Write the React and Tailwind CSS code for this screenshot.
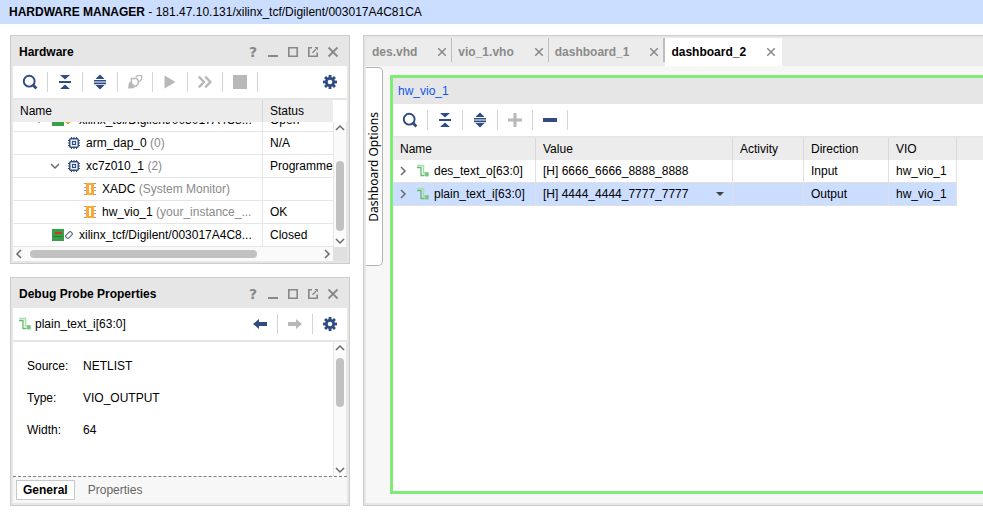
import React from "react";

const NAVY = "#2f4b82";
const MUTED = "#b8b8b8";

function Svg({ w = 16, h = 16, label, children, className = "" }) {
  return (
    <svg
      width={w}
      height={h}
      viewBox={`0 0 ${w} ${h}`}
      fill="none"
      aria-hidden={label ? undefined : true}
      className={`block shrink-0 ${className}`}
    >
      {children}
    </svg>
  );
}

const SearchIcon = () => (
  <Svg>
    <circle cx="7.2" cy="7.2" r="5.4" stroke={NAVY} strokeWidth="1.9" />
    <path d="M11 11l3.4 3.4" stroke={NAVY} strokeWidth="2.8" />
  </Svg>
);

const CollapseIcon = () => (
  <Svg>
    <path d="M3 1h10L8 5.6zM3 15h10L8 10.4z" fill={NAVY} />
    <path d="M2 7h12v2H2z" fill={NAVY} />
  </Svg>
);

const ExpandIcon = () => (
  <Svg>
    <path d="M8 0.6L12.6 5H3.4zM8 15.4l4.6-4.4H3.4z" fill={NAVY} />
    <path d="M2 6h12v1.6H2zM2 8.6h12v1.6H2z" fill={NAVY} />
  </Svg>
);

const ConnectIcon = () => (
  <Svg>
    <path d="M4.4 4.4h5.2l1.6 1.8v3.6L9.4 12H7L4.4 9.4z" stroke={MUTED} strokeWidth="1.5" />
    <path d="M3 7.6l5 5.2-1.6 1.4L1 14.6l.8-5z" fill={MUTED} />
    <circle cx="7.6" cy="8" r="2.2" fill="#fff" />
    <path d="M8.6 3.2l2-1.6h4v3.6l-2.2 2.6" stroke={MUTED} strokeWidth="1.3" />
  </Svg>
);

const PlayIcon = () => (
  <Svg>
    <path d="M2.5 1.5v13L13.5 8z" fill={MUTED} />
  </Svg>
);

const FastIcon = () => (
  <Svg>
    <path d="M1.8 2.6L7 8l-5.2 5.4M8.2 2.6L13.4 8l-5.2 5.4" stroke={MUTED} strokeWidth="2.4" />
  </Svg>
);

const StopIcon = () => (
  <Svg>
    <path d="M1 1h14v14H1z" fill={MUTED} />
  </Svg>
);

const GearIcon = () => (
  <Svg>
    <g fill={NAVY}>
      <path d="M6.6 1h2.8v14H6.6z" />
      <path d="M1 6.6h14v2.8H1z" />
      <path d="M6.6 1h2.8v14H6.6z" transform="rotate(45 8 8)" />
      <path d="M1 6.6h14v2.8H1z" transform="rotate(45 8 8)" />
      <circle cx="8" cy="8" r="5" />
    </g>
    <circle cx="8" cy="8" r="2.3" fill="#fff" />
  </Svg>
);

const PlusIcon = () => (
  <Svg>
    <path d="M8 1v14M1 8h14" stroke={MUTED} strokeWidth="3" />
  </Svg>
);

const MinusIcon = () => (
  <Svg>
    <path d="M1 6h14v4H1z" fill={NAVY} />
  </Svg>
);

const BackIcon = () => (
  <Svg>
    <path d="M1 8l6-5v3h8v4H7v3z" fill={NAVY} />
  </Svg>
);

const ForwardIcon = () => (
  <Svg>
    <path d="M15 8L9 3v3H1v4h8v3z" fill={MUTED} />
  </Svg>
);

const CloseIcon = ({ size = 12 }) => (
  <svg width={size} height={size} viewBox="0 0 12 12" fill="none" aria-hidden="true" className="block shrink-0">
    <path d="M1.5 1.5l9 9M10.5 1.5l-9 9" stroke="#888" strokeWidth="1.8" />
  </svg>
);

const MinimizeIcon = () => (
  <Svg w={12} h={12}>
    <path d="M1 9h10v2H1z" fill="#888" />
  </Svg>
);

const MaximizeIcon = () => (
  <Svg w={12} h={12}>
    <path d="M1.8 1.8h8.4v8.4H1.8z" stroke="#888" strokeWidth="1.6" />
  </Svg>
);

const PopoutIcon = () => (
  <Svg w={12} h={12}>
    <path d="M5 1.8H1.8v8.4h8.4V6.5" stroke="#888" strokeWidth="1.6" />
    <path d="M5.5 6.8L9 3.2" stroke="#888" strokeWidth="1.4" />
    <path d="M7.4 1H11v3.6z" fill="#888" />
  </Svg>
);

const ProbeIcon = () => (
  <Svg w={14} h={14}>
    <path d="M1 3.5h4v8h3.5" stroke="#62bb6b" strokeWidth="1.3" />
    <path d="M1 1.5h6.5v7.5h2" stroke="#a9dcab" strokeWidth="1.5" />
    <rect x="8.8" y="8" width="4" height="4.6" rx="1.4" fill="#7cc682" />
  </Svg>
);

const ChipIcon = () => (
  <Svg w={12} h={12}>
    <path
      d="M3.5 0v2M6 0v2M8.5 0v2M3.5 10v2M6 10v2M8.5 10v2M0 3.5h2M0 6h2M0 8.5h2M10 3.5h2M10 6h2M10 8.5h2"
      stroke={NAVY}
      strokeWidth="1.1"
    />
    <rect x="1.8" y="1.8" width="8.4" height="8.4" rx="1" stroke={NAVY} strokeWidth="1.4" />
    <rect x="4.5" y="4.5" width="3" height="3" stroke={NAVY} strokeWidth="1.2" />
  </Svg>
);

const CoreIcon = () => (
  <Svg w={12} h={14}>
    <path d="M0 1.5h12M0 5.5h12M0 8.5h12M0 12.5h12" stroke="#9a9a9a" />
    <path d="M2 1h8v12H2z" fill="#f9a936" />
    <path d="M5 3h2v8H5z" fill="#fff" />
  </Svg>
);

const TargetIcon = ({ open }) => (
  <Svg w={21} h={12}>
    <path d="M0 0h12v12H0z" fill="#37a048" />
    <path d="M3 3h7v2H3z" fill="#c93a2c" />
    <path d="M1 7.5h10" stroke="#2a7f3a" />
    <rect
      x="-3.6"
      y="-2"
      width="7.2"
      height="4"
      rx="1.5"
      transform="translate(17 6) rotate(-45)"
      stroke={open ? "#d99a1c" : "#56657f"}
      strokeWidth="1.1"
      fill={open ? "#f6c24a" : "#fff"}
    />
  </Svg>
);

function Chevron({ dir, className = "" }) {
  const paths = {
    up: "M2 8l4-4 4 4",
    down: "M2 4l4 4 4-4",
    left: "M8 2L4 6l4 4",
    right: "M4 2l4 4-4 4",
  };
  return (
    <Svg w={12} h={12} className={className}>
      <path d={paths[dir]} stroke="#6b6b6b" strokeWidth="1.5" />
    </Svg>
  );
}

function ToolButton({ label, icon, divider = true, disabled = false }) {
  return (
    <>
      <button type="button" aria-label={label} disabled={disabled} className="flex h-8 w-[34px] items-center justify-center">
        {icon}
      </button>
      {divider && <span className="h-5 w-px bg-[#d4d4d4]" />}
    </>
  );
}

function WindowButtons() {
  return (
    <div className="flex pr-1">
      <button type="button" aria-label="Help" className="flex size-5 items-center justify-center font-['DejaVu_Sans',sans-serif] text-[14px] leading-5 font-bold text-[#888]">
        ?
      </button>
      <button type="button" aria-label="Minimize" className="flex size-5 items-center justify-center"><MinimizeIcon /></button>
      <button type="button" aria-label="Maximize" className="flex size-5 items-center justify-center"><MaximizeIcon /></button>
      <button type="button" aria-label="Float" className="flex size-5 items-center justify-center"><PopoutIcon /></button>
      <button type="button" aria-label="Close" className="flex size-5 items-center justify-center"><CloseIcon /></button>
    </div>
  );
}

function Panel({ title, className = "", children }) {
  return (
    <section className={`flex flex-col border border-[#cccccc] bg-[#e6e6e6] p-0.5 ${className}`}>
      <header className="flex h-7 items-center justify-between pl-1.5">
        <h2 className="font-bold">{title}</h2>
        <WindowButtons />
      </header>
      {children}
    </section>
  );
}

function VerticalScrollbar({ children }) {
  return (
    <div className="flex w-3.5 shrink-0 flex-col items-center border-x border-[#e6e6e6] bg-[#fafafa]">
      <Chevron dir="up" />
      {children}
      <Chevron dir="down" />
    </div>
  );
}

function HardwareRow({ indent, chevron, icon, name, note, status }) {
  return (
    <tr>
      <td className={`h-[23px] border-r border-b border-[#e6e6e6] p-0 ${indent}`}>
        <span className="flex items-center">
          {chevron && <Chevron dir="down" className="mr-[7px]" />}
          {icon}
          <span className="ml-1.5 whitespace-nowrap">
            {name}
            {note && <span className="text-[#8a8a8a]"> {note}</span>}
          </span>
        </span>
      </td>
      <td className="h-[23px] border-b border-[#e6e6e6] p-0 pl-[7px] whitespace-nowrap">
        <span className="block overflow-hidden">{status}</span>
      </td>
    </tr>
  );
}

function HardwarePanel() {
  return (
    <Panel title="Hardware">
      <div className="flex items-center bg-white">
        <ToolButton label="Search" icon={<SearchIcon />} />
        <ToolButton label="Collapse all" icon={<CollapseIcon />} />
        <ToolButton label="Expand all" icon={<ExpandIcon />} />
        <ToolButton label="Auto connect" icon={<ConnectIcon />} disabled />
        <ToolButton label="Run trigger" icon={<PlayIcon />} disabled />
        <ToolButton label="Run trigger immediate" icon={<FastIcon />} disabled />
        <ToolButton label="Stop trigger" icon={<StopIcon />} disabled />
        <div className="grow" />
        <ToolButton label="Settings" icon={<GearIcon />} divider={false} />
      </div>
      <div className="mt-0.5 flex bg-white pr-3.5">
        <div className="flex h-[22px] w-[250px] items-center border-r border-[#d9d9d9] bg-[#ececec] pl-[7px]">Name</div>
        <div className="flex h-[22px] grow items-center bg-[#ececec] pl-[7px]">Status</div>
      </div>
      <div className="flex h-[125px] bg-white">
        <div className="flex min-w-0 grow flex-col justify-end overflow-hidden">
          <table aria-label="Hardware targets" className="w-full table-fixed border-separate border-spacing-0">
            <colgroup>
              <col className="w-[250px]" />
              <col />
            </colgroup>
            <tbody>
              <HardwareRow indent="pl-5" chevron icon={<TargetIcon open />} name="xilinx_tcf/Digilent/003017A4C8..." status="Open" />
              <HardwareRow indent="pl-[55px]" icon={<ChipIcon />} name="arm_dap_0" note="(0)" status="N/A" />
              <HardwareRow indent="pl-9" chevron icon={<ChipIcon />} name="xc7z010_1" note="(2)" status="Programmed" />
              <HardwareRow indent="pl-[71px]" icon={<CoreIcon />} name="XADC" note="(System Monitor)" status="" />
              <HardwareRow indent="pl-[71px]" icon={<CoreIcon />} name="hw_vio_1" note="(your_instance_..." status="OK" />
              <HardwareRow indent="pl-[39px]" icon={<TargetIcon />} name="xilinx_tcf/Digilent/003017A4C8..." status="Closed" />
            </tbody>
          </table>
        </div>
        <VerticalScrollbar>
          <div className="grow" />
          <div className="mb-1 h-[70px] w-2 rounded-full bg-[#c1c1c1]" />
        </VerticalScrollbar>
      </div>
      <div className="flex h-3.5 bg-[#fafafa]">
        <div className="flex grow items-center">
          <Chevron dir="left" />
          <div className="mx-[5px] flex grow">
            <div className="h-2 w-[227px] rounded-full bg-[#c1c1c1]" />
          </div>
          <Chevron dir="right" />
        </div>
        <div className="w-3.5 bg-[#e0e0e0]" />
      </div>
    </Panel>
  );
}

function PropertiesPanel() {
  const rows = [
    ["Source:", "NETLIST"],
    ["Type:", "VIO_OUTPUT"],
    ["Width:", "64"],
  ];
  return (
    <Panel title="Debug Probe Properties" className="grow">
      <div className="flex items-center bg-white pl-[5px]">
        <ProbeIcon />
        <span className="ml-[3px] grow">plain_text_i[63:0]</span>
        <ToolButton label="Previous" icon={<BackIcon />} />
        <ToolButton label="Next" icon={<ForwardIcon />} disabled />
        <ToolButton label="Settings" icon={<GearIcon />} divider={false} />
      </div>
      <div className="mt-0.5 flex grow bg-white">
        <dl className="grow pt-2 pl-3.5">
          {rows.map(([label, value]) => (
            <div key={label} className="flex h-8 items-center">
              <dt className="w-14">{label}</dt>
              <dd>{value}</dd>
            </div>
          ))}
        </dl>
        <VerticalScrollbar>
          <div className="mt-1 h-[49px] w-2 rounded-full bg-[#c1c1c1]" />
          <div className="grow" />
        </VerticalScrollbar>
      </div>
      <div role="tablist" className="flex h-[27px] items-center border-t border-dashed border-[#808080] bg-[#f7f7f7] pl-[3px]">
        <button type="button" role="tab" aria-selected="true" className="h-5 border border-[#c8c8c8] bg-white px-1.5 font-bold">
          General
        </button>
        <button type="button" role="tab" aria-selected="false" className="h-5 px-[13px] text-[#666]">
          Properties
        </button>
      </div>
    </Panel>
  );
}

function FileTab({ name, active = false, last = false }) {
  const tone = active ? "bg-white pr-1.5 text-black" : "pr-1 text-[#8a8a8a]";
  return (
    <>
      <div className={`flex h-full items-center gap-5 pl-1.5 font-bold ${tone}`}>
        <button type="button" role="tab" aria-selected={active}>{name}</button>
        <button type="button" aria-label={`Close ${name}`}><CloseIcon size={10} /></button>
      </div>
      {!active && <span className={`h-6 self-start bg-[#bdbdbd] ${last ? "w-0.5" : "w-px"}`} />}
    </>
  );
}

function ProbeName({ children }) {
  return (
    <span className="flex items-center gap-1">
      <Chevron dir="right" className="mr-[3px]" />
      <ProbeIcon />
      {children}
    </span>
  );
}

function ProbeTable() {
  const head = "h-[22px] border-r border-[#d9d9d9] bg-[#ececec] p-0 pl-[7px] text-left font-normal";
  const base = "h-[23px] border-r border-b border-[#e0e0e0] p-0 whitespace-nowrap";
  const cell = `${base} pl-[7px]`;
  const nameCell = `${base} pl-1`;
  return (
    <table aria-label="Probes" className="w-full table-fixed border-separate border-spacing-0">
      <colgroup>
        <col className="w-[143px]" />
        <col className="w-[197px]" />
        <col className="w-[71px]" />
        <col className="w-[85px]" />
        <col className="w-[68px]" />
        <col />
      </colgroup>
      <thead>
        <tr>
          <th className={head}>Name</th>
          <th className={head}>Value</th>
          <th className={head}>Activity</th>
          <th className={head}>Direction</th>
          <th className={head}>VIO</th>
          <td className="bg-[#ececec] p-0" />
        </tr>
      </thead>
      <tbody>
        <tr>
          <td className={nameCell}><ProbeName>des_text_o[63:0]</ProbeName></td>
          <td className={cell}>[H] 6666_6666_8888_8888</td>
          <td className={cell} />
          <td className={cell}>Input</td>
          <td className={cell}>hw_vio_1</td>
          <td />
        </tr>
        <tr>
          <td className={`bg-[#ccdeff] ${nameCell}`}><ProbeName>plain_text_i[63:0]</ProbeName></td>
          <td className={`bg-[#ccdeff] ${cell}`}>
            <label className="flex items-center pr-2">
              <select aria-label="plain_text_i value" className="grow appearance-none bg-transparent p-0">
                <option>[H] 4444_4444_7777_7777</option>
              </select>
              <Svg w={8} h={6}>
                <path d="M0 1h8L4 5z" fill="#404040" />
              </Svg>
            </label>
          </td>
          <td className={`bg-[#ccdeff] ${cell}`} />
          <td className={`bg-[#ccdeff] ${cell}`}>Output</td>
          <td className={`bg-[#ccdeff] ${cell}`}>hw_vio_1</td>
          <td />
        </tr>
      </tbody>
    </table>
  );
}

function Workspace() {
  return (
    <main className="flex min-w-0 grow flex-col border border-r-0 border-[#cccccc] bg-[#e6e6e6] py-0.5 pl-0.5">
      <div role="tablist" className="flex h-7 items-center bg-[#ececec]">
        <FileTab name="des.vhd" />
        <FileTab name="vio_1.vho" />
        <FileTab name="dashboard_1" last />
        <FileTab name="dashboard_2" active />
      </div>
      <div className="flex grow items-start gap-[7px] bg-[#f7f7f7]">
        <button
          type="button"
          className="mt-px flex h-[199px] w-[17px] items-center justify-center rounded-r-[5px] border border-l-0 border-[#b4b4b4] bg-white font-['Noto_Sans',sans-serif] text-[12px]"
        >
          <span className="rotate-180 leading-4 whitespace-nowrap [writing-mode:vertical-rl]">Dashboard Options</span>
        </button>
        <div className="flex min-w-0 grow flex-col self-stretch py-[9px]">
          <section className="flex grow flex-col border-[3px] border-r-0 border-[#80eb78] bg-white">
            <header className="flex h-[26px] items-center bg-[#e6e6e6] pl-[5px]">
              <a href="#hw_vio_1" className="text-[#1155ee]">hw_vio_1</a>
            </header>
            <div className="flex items-center border-b-2 border-[#e6e6e6]">
              <ToolButton label="Search" icon={<SearchIcon />} />
              <ToolButton label="Collapse all" icon={<CollapseIcon />} />
              <ToolButton label="Expand all" icon={<ExpandIcon />} />
              <ToolButton label="Add probe" icon={<PlusIcon />} disabled />
              <ToolButton label="Remove probe" icon={<MinusIcon />} />
            </div>
            <ProbeTable />
          </section>
        </div>
      </div>
    </main>
  );
}

export default function App() {
  return (
    <div className="flex min-h-screen flex-col bg-white font-['Liberation_Sans',Arial,sans-serif] text-[12px] leading-4 text-black">
      <header className="flex h-6 items-center bg-[#ccdeff] pl-[9px]">
        <h1>
          <b>HARDWARE MANAGER</b> - 181.47.10.131/xilinx_tcf/Digilent/003017A4C81CA
        </h1>
      </header>
      <div className="flex grow gap-[13px] pt-[11px] pb-[9px] pl-2.5">
        <aside className="flex w-[340px] shrink-0 flex-col gap-[13px]">
          <HardwarePanel />
          <PropertiesPanel />
        </aside>
        <Workspace />
      </div>
    </div>
  );
}
